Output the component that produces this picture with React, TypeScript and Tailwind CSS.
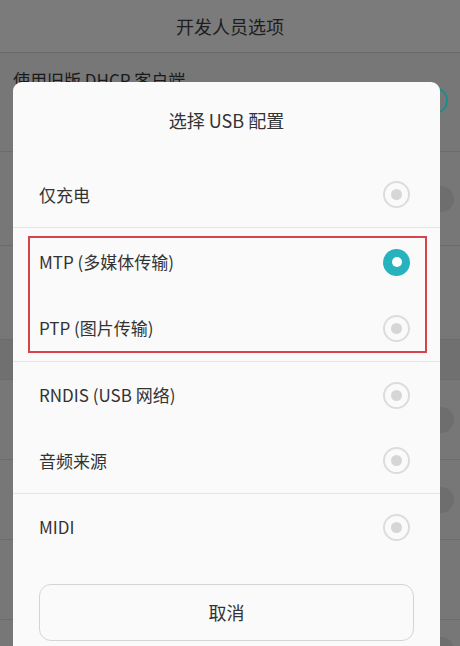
import React from 'react';

const options = [
  { label: '仅充电', checked: false },
  { label: 'MTP (多媒体传输)', checked: true },
  { label: 'PTP (图片传输)', checked: false },
  { label: 'RNDIS (USB 网络)', checked: false },
  { label: '音频来源', checked: false },
  { label: 'MIDI', checked: false },
];

const Radio: React.FC<{ checked: boolean }> = ({ checked }) =>
  checked ? (
    <div className="w-[27px] h-[27px] rounded-full bg-[#27b3bd] flex items-center justify-center">
      <div className="w-[10px] h-[10px] rounded-full bg-white" />
    </div>
  ) : (
    <div className="w-[27px] h-[27px] rounded-full border-2 border-[#dcdcdc] flex items-center justify-center">
      <div className="w-[11px] h-[11px] rounded-full bg-[#d6d6d6]" />
    </div>
  );

const Row: React.FC<{ label: string; checked: boolean; border?: boolean }> = ({ label, checked, border }) => (
  <div className={`h-[66px] flex items-center justify-between pl-[26px] pr-[30px] ${border ? 'border-b border-[#e6e6e6]' : ''}`}>
    <span className="text-[17px] text-[#333]">{label}</span>
    <Radio checked={checked} />
  </div>
);

// background settings row with a (mostly hidden) switch knob at the right edge
const BgRow: React.FC<{ h: string; knob?: boolean; extra?: string }> = ({ h, knob, extra }) => (
  <div className={`${h} flex items-center justify-end pr-[6px] border-b border-[#6c6c6c] ${extra ?? ''}`}>
    {knob && <div className="w-[26px] h-[26px] rounded-full bg-[#6e6e6e]" />}
  </div>
);

export default function App() {
  return (
    <div
      className="relative w-[460px] h-[646px] overflow-hidden bg-[#777777]"
      style={{ fontFamily: '"Noto Sans CJK SC", "Noto Sans", sans-serif' }}
    >
      {/* page behind the dialog */}
      <div className="h-[53px] flex items-center justify-center border-b border-[#6a6a6a] bg-[#7b7b7b]">
        <span className="text-[18px] text-[#1e1e1e]">开发人员选项</span>
      </div>
      <div className="h-[99px] border-b border-[#6c6c6c] pl-[13px] pr-[12px] flex items-start justify-between">
        <span className="text-[17px] text-[#1a1a1a] pt-[14px]">使用旧版 DHCP 客户端</span>
        <div className="mt-[34px] w-[27px] h-[27px] rounded-full border-2 border-[#1f8c8c]" />
      </div>
      <BgRow h="h-[94px]" knob />
      <BgRow h="h-[94px]" />
      <BgRow h="h-[40px]" extra="bg-[#707070]" />
      <BgRow h="h-[80px]" knob />
      <BgRow h="h-[80px]" knob />
      <BgRow h="h-[80px]" />
      <BgRow h="h-[60px]" knob />

      {/* dialog */}
      <div className="absolute left-[13px] top-[82px] w-[427px] h-[580px] rounded-[9px] bg-[#fafafa]">
        <div className="h-[80px] pb-[4px] flex items-center justify-center">
          <span className="text-[18px] text-[#333]">选择 USB 配置</span>
        </div>
        <Row {...options[0]} border />
        <div className="border-b border-[#e6e6e6] pt-[1px]">
          <Row {...options[1]} />
          <Row {...options[2]} />
        </div>
        <Row {...options[3]} />
        <Row {...options[4]} border />
        <Row {...options[5]} />
        <div className="px-[26px] pt-[24px]">
          <div className="h-[57px] rounded-[12px] border border-[#d4d4d4] flex items-center justify-center">
            <span className="text-[18px] text-[#333]">取消</span>
          </div>
        </div>

        {/* red highlight annotation */}
        <div className="absolute left-[15px] top-[154px] w-[399px] h-[117px] border-2 border-[#d7424b]" />
      </div>
    </div>
  );
}
